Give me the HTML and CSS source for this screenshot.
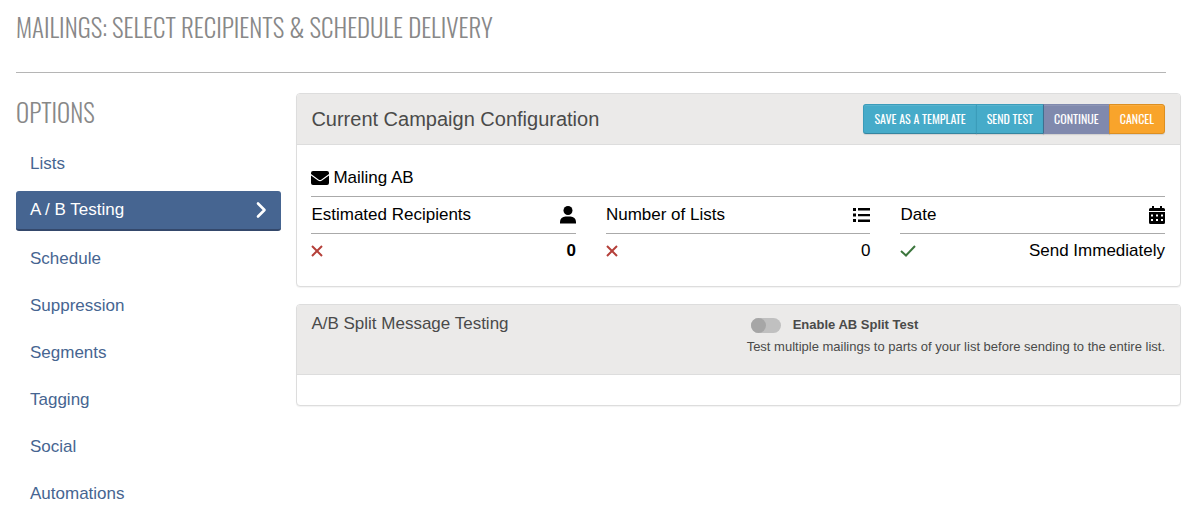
FILE: index.html
```
<!DOCTYPE html>
<html lang="en">
<head>
  <meta charset="UTF-8">
  <title>Mailings</title>
  <link rel="stylesheet" href="styles.css">
</head>
<body>
<header class="page-header">
  <h1>Mailings: Select Recipients &amp; Schedule Delivery</h1>
</header>
<div class="columns">
  <nav class="sidebar">
    <h2>Options</h2>
    <ul>
      <li><a href="#lists">Lists</a></li>
      <li><a href="#ab" class="active">A / B Testing
        <svg width="11" height="18" viewBox="0 0 11 18"><path d="M2 2.500l6.500 6.500L2 15.500" fill="none" stroke="#fff" stroke-width="2.600" stroke-linecap="round" stroke-linejoin="round"/></svg></a></li>
      <li><a href="#schedule">Schedule</a></li>
      <li><a href="#suppression">Suppression</a></li>
      <li><a href="#segments">Segments</a></li>
      <li><a href="#tagging">Tagging</a></li>
      <li><a href="#social">Social</a></li>
      <li><a href="#automations">Automations</a></li>
    </ul>
  </nav>

  <main class="content">
    <section class="panel">
      <div class="panel-heading">
        <h3>Current Campaign Configuration</h3>
        <div class="btn-group">
          <button type="button" class="btn btn-info">Save as a Template</button>
          <button type="button" class="btn btn-info">Send Test</button>
          <button type="button" class="btn btn-continue">Continue</button>
          <button type="button" class="btn btn-cancel">Cancel</button>
        </div>
      </div>
      <div class="panel-body">
        <div class="mailing">
          <svg width="18" height="14" viewBox="0 0 18 14"><path d="M2 0h14a2 2 0 0 1 2 2v1L10.500 8.500a2.500 2.500 0 0 1-3 0L0 3V2a2 2 0 0 1 2-2z"/><path d="M0 4.500l7 5a3.500 3.500 0 0 0 4 0l7-5V12a2 2 0 0 1-2 2H2a2 2 0 0 1-2-2z"/></svg>
          Mailing AB
        </div>
        <div class="stats">
          <div class="stat">
            <div class="stat-title">Estimated Recipients
              <svg width="16" height="18" viewBox="0 0 16 18"><circle cx="8" cy="4.500" r="4.500"/><path d="M0 17.500V16a5.500 5.500 0 0 1 5.500-5.500h5A5.500 5.500 0 0 1 16 16v1.500z"/></svg>
            </div>
            <div class="stat-value">
              <svg class="cross" width="12" height="12" viewBox="0 0 12 12"><path d="M1 1l10 10M11 1L1 11"/></svg>
              <b>0</b>
            </div>
          </div>
          <div class="stat">
            <div class="stat-title">Number of Lists
              <svg width="18" height="14" viewBox="0 0 18 14"><path d="M1 0h3v3H1zM1 5.500h3v3H1zM1 11h3v3H1zM6 0h12v2.500H6zM6 6h12v2.300H6zM6 11.500h12V14H6z"/></svg>
            </div>
            <div class="stat-value">
              <svg class="cross" width="12" height="12" viewBox="0 0 12 12"><path d="M1 1l10 10M11 1L1 11"/></svg>
              <span>0</span>
            </div>
          </div>
          <div class="stat">
            <div class="stat-title">Date
              <svg width="16" height="18" viewBox="0 0 16 18"><path fill-rule="evenodd" d="M3 0h2v2h6V0h2v2h1.500A1.500 1.500 0 0 1 16 3.500V5H0V3.500A1.500 1.500 0 0 1 1.500 2H3zM0 6h16v10.500a1.500 1.500 0 0 1-1.500 1.500h-13A1.500 1.500 0 0 1 0 16.500zM2 8.500v2h2v-2zM7 8.500v2h2v-2zM12 8.500v2h2v-2zM2 13v2h2v-2zM7 13v2h2v-2zM12 13v2h2v-2z"/></svg>
            </div>
            <div class="stat-value">
              <svg class="check" width="16" height="12" viewBox="0 0 16 12"><path d="M1 6l5 4.500L15 1"/></svg>
              <span>Send Immediately</span>
            </div>
          </div>
        </div>
      </div>
    </section>

    <section class="panel">
      <div class="panel-heading split-heading">
        <h4>A/B Split Message Testing</h4>
        <div class="split-test">
          <div class="switch-row">
            <input type="checkbox" id="enable-split" class="switch">
            <label for="enable-split">Enable AB Split Test</label>
          </div>
          <p>Test multiple mailings to parts of your list before sending to the entire list.</p>
        </div>
      </div>
      <div class="panel-empty"></div>
    </section>
  </main>
</div>
</body>
</html>
```
FILE: styles.css
```
* { box-sizing: border-box; }
body {
  margin: 0;
  padding: 0 19px 0 16px;
  background: #fff;
  color: #000;
  font-family: Arial, "Liberation Sans", sans-serif;
  font-size: 17px;
  line-height: 20px;
}
h1, h2, h3, h4, p, ul { margin: 0; padding: 0; font-weight: normal; }

/* condensed headings */
h1, h2 {
  font-family: Oswald, "Liberation Sans Narrow", "Liberation Sans", sans-serif;
  font-size: 25px;
  font-weight: 300;
  line-height: 36px;
  color: #888;
  text-transform: uppercase;
}
.page-header {
  margin-right: 15px;
  padding: 9px 0 27px;
  border-bottom: 1px solid #b5b5b5;
}

.columns {
  display: grid;
  grid-template-columns: 3fr 10fr;
  gap: 15px;
}
.sidebar { padding-top: 21px; }
.sidebar ul {
  display: flex;
  flex-direction: column;
  gap: 8px;
  margin-top: 14px;
  list-style: none;
}
.sidebar a {
  display: flex;
  align-items: center;
  justify-content: space-between;
  min-height: 39px;
  padding: 0 14px;
  color: #466591;
  text-decoration: none;
}
.sidebar .active {
  min-height: 40px;
  background: #466591;
  border-bottom: 2px solid #34486b;
  border-radius: 3px;
  color: #fff;
}

.content {
  display: flex;
  flex-direction: column;
  gap: 17px;
  padding-top: 20px;
}
.panel {
  border: 1px solid #ddd;
  border-radius: 4px;
  background: #fff;
  box-shadow: 0 1px 1px rgba(0, 0, 0, 0.05);
}
.panel-heading {
  display: flex;
  align-items: center;
  justify-content: space-between;
  padding: 10px 15px 10px 14px;
  background: #ebeae9;
  border-bottom: 1px solid #ddd;
  border-radius: 3px 3px 0 0;
  color: #4a4a4a;
}
.panel-heading h3 { font-size: 20px; }
.panel-heading h4 { font-size: 17px; line-height: 18px; }

.btn-group { display: flex; }
.btn {
  height: 30px;
  padding: 0 10px 1px;
  border: 1px solid #3b9cba;
  background: #46abc9;
  color: #fff;
  font-family: Oswald, "Liberation Sans Narrow", "Liberation Sans", sans-serif;
  font-size: 12px;
  font-weight: 400;
  text-transform: uppercase;
  box-shadow: inset 0 1px 0 rgba(255, 255, 255, 0.1), 0 1px 1px rgba(0, 0, 0, 0.1);
}
.btn + .btn { margin-left: -1px; }
.btn:first-child { border-radius: 3px 0 0 3px; }
.btn:last-child { border-radius: 0 3px 3px 0; }
.btn-info { border-bottom-color: #3585a0; }
.btn-continue { background: #8089ad; border-color: #8089ad; border-left-color: #3f6f8f; }
.btn-cancel { background: #f9a42b; border-color: #dd8f20; }

.panel-body { padding: 20px 15px 25px 14px; }
.mailing {
  display: flex;
  align-items: center;
  gap: 4px;
  padding: 3px 0 8px;
  border-bottom: 1px solid #aaa;
}
.stats {
  display: grid;
  grid-template-columns: repeat(3, 1fr);
  gap: 30px;
}
.stat-title, .stat-value {
  display: flex;
  align-items: center;
  justify-content: space-between;
}
.stat-title {
  padding: 8px 0;
  border-bottom: 1px solid #aaa;
}
.stat-value { padding-top: 7px; }
.cross, .check {
  fill: none;
  stroke: #b5403a;
  stroke-width: 2;
}
.check { stroke: #3c763d; }

.split-heading { align-items: flex-start; padding-bottom: 17px; }
.split-test { font-size: 13px; }
.switch-row {
  display: flex;
  align-items: center;
  gap: 12px;
  padding-left: 4px;
  font-weight: bold;
}
.split-test p { margin-top: 2px; }
.switch {
  appearance: none;
  width: 30px;
  height: 15px;
  margin: 0;
  border-radius: 8px;
  background: #c0c0c0;
}
.switch::before {
  content: "";
  display: block;
  width: 15px;
  height: 15px;
  border-radius: 50%;
  background: #a6a6a6;
}
.switch:checked::before { margin-left: auto; }
.panel-empty { height: 30px; }
```
